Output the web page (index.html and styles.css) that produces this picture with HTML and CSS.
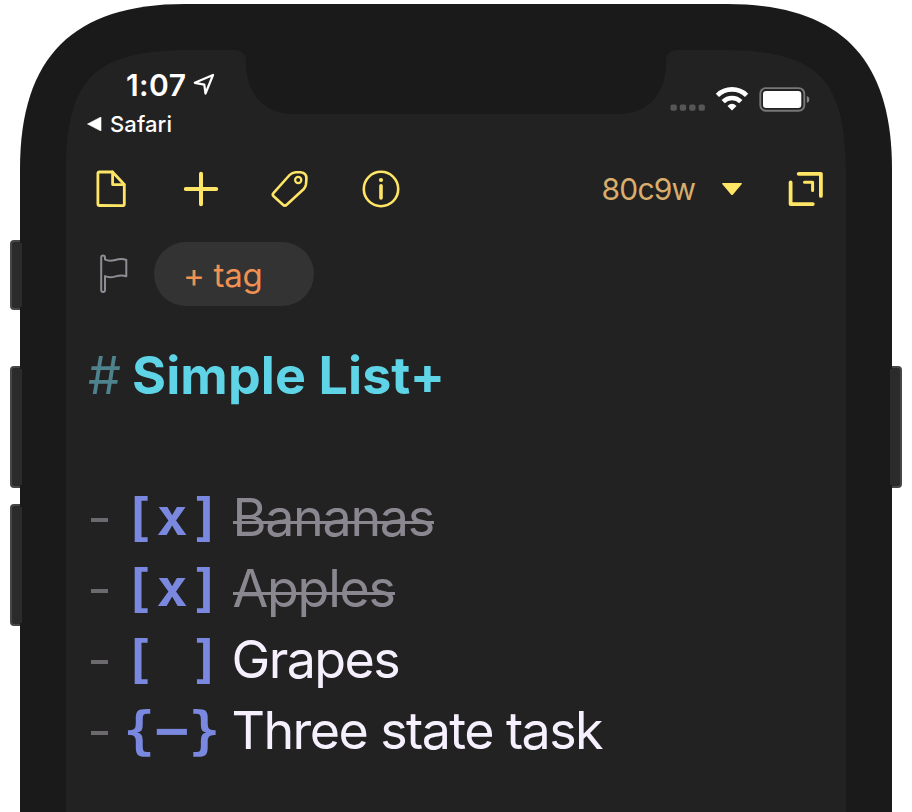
FILE: index.html
```html
<!DOCTYPE html>
<html lang="en">
<head>
<meta charset="utf-8">
<title>Simple List+</title>
<link rel="stylesheet" href="styles.css">
</head>
<body>
<div class="stage">
  <svg class="device" viewBox="0 0 912 812" aria-hidden="true">
    <g fill="#2b2b2b" stroke="#474747" stroke-width="2">
      <rect x="11" y="241" width="20" height="68" rx="3"/>
      <rect x="11" y="367" width="20" height="120" rx="3"/>
      <rect x="11" y="505" width="20" height="120" rx="3"/>
      <rect x="881" y="367" width="20" height="120" rx="3"/>
    </g>
    <path fill="#1a1a1a" d="M20 812V169C20 57 73 4 185 4H727C839 4 892 57 892 169V812Z"/>
    <path fill="#2b2b2b" d="M20 243h2v64h-2zM20 369h2v116h-2zM20 507h2v116h-2zM890 369h2v116h-2z"/>
    <path fill="#222222" d="M66 812V174C66 78 94 50 190 50H234C242 50 246 54 246 62C246 94 264 114 294 114H618C648 114 666 94 666 62C666 54 670 50 678 50H722C818 50 846 78 846 174V812Z"/>
  </svg>
  <main class="screen">
    <header class="status">
      <div class="status-left">
        <div class="clock"><span class="time">1:07</span>
          <svg class="location" width="22" height="23" viewBox="0 0 22 23"><path d="M1.8 9.8L20 2L12.5 20.5L11.3 11.6Z" fill="none" stroke="#fff" stroke-width="2.2" stroke-linejoin="round"/></svg>
        </div>
        <div class="back"><svg width="15" height="14" viewBox="0 0 15 14"><path d="M0.5 7L14 0V14Z" fill="#fff" stroke="#fff" stroke-width=".6" stroke-linejoin="round"/></svg><span class="app">Safari</span></div>
      </div>
      <svg class="signals" width="140" height="28" viewBox="670 85 140 28">
        <g fill="#565657"><rect x="670.5" y="104.5" width="6.3" height="6.3" rx="1.8"/><rect x="679.8" y="104.5" width="6.3" height="6.3" rx="1.8"/><rect x="689.2" y="104.5" width="6.3" height="6.3" rx="1.8"/><rect x="698.6" y="104.5" width="6.3" height="6.3" rx="1.8"/></g>
        <g fill="none" stroke="#fff" stroke-width="4.6"><path d="M717.4 95.3A21 21 0 0 1 746.6 95.3"/><path d="M723.2 101.6A12.6 12.6 0 0 1 740.8 101.6"/></g>
        <path fill="#fff" d="M727.5 105.9Q732 101.5 736.5 105.9L732 110.6Z"/>
        <rect x="760.3" y="88.1" width="44" height="22.6" rx="5.5" fill="none" stroke="#777" stroke-width="1.9"/>
        <rect x="763" y="91" width="38.3" height="17" rx="3.2" fill="#fff"/>
        <path fill="#858585" d="M806.8 96Q809.4 97 809.4 99.4Q809.4 101.8 806.8 102.8Z"/>
      </svg>
    </header>
    <nav class="toolbar">
      <svg class="tools" width="306" height="42" viewBox="94 168 306 42" fill="none" stroke="#fee566" stroke-width="2.8" stroke-linejoin="round" stroke-linecap="round">
        <path d="M99.500 172H112.500L124.300 184.500V204Q124.300 205.700 122.600 205.700L99.500 205.500Q97.900 205.500 97.900 204V173.500Q97.900 172 99.500 172Z"/>
        <path d="M112.600 172V184.600H124"/>
        <path d="M185.800 189H216.200M201 173.800V204.200" stroke-width="4"/>
        <path d="M273.400 193.200L289.600 175Q292 172.400 295.800 172.200L300.500 172.300Q306.600 172.600 306.400 178.800L306 184.200Q305.700 187 303.800 189L286.700 204.700Q284.800 206.400 283 204.700L273.600 196.200Q272 194.700 273.400 193.200Z" stroke-width="2.6"/>
        <circle cx="298.200" cy="180" r="3.1" stroke-width="2.2"/>
        <circle cx="381" cy="189" r="17.2" stroke-width="2.6"/>
        <path d="M381 185.700V198" stroke-width="3.6"/>
        <circle cx="381" cy="180" r="2.1" fill="#fee566" stroke="none"/>
      </svg>
      <div class="doc"><span class="doc-id">80c9w</span>
        <svg class="caret" width="20" height="13" viewBox="0 0 20 13"><path fill="#fee566" d="M0.800 0H19.200Q20.500 .2 19.600 1.200L11 11.400Q10 12.500 9 11.400L.4 1.200Q-.4 .2 .8 0Z"/></svg>
      </div>
      <svg class="expand" width="36" height="36" viewBox="788 171 36 36" fill="none" stroke="#fee566" stroke-width="3.8" stroke-linecap="round" stroke-linejoin="round"><path d="M798.700 173.800H820.900V195.900M790.600 182.300V204.100H812.800"/><path d="M804.500 182.200H812.600V190.400" stroke-width="3"/></svg>
    </nav>
    <div class="tags">
      <svg width="30" height="40" viewBox="99 254 30 40" fill="none" stroke="#8f8c94" stroke-width="2" stroke-linejoin="round"><path d="M105 259.500C113 264 117 256.200 126.300 260V276.300C117.500 272.500 113 280.500 105 276V290Q105 292 103 292Q101.200 292 101.200 290V257.500Q101.200 255.500 103 255.500Q105 255.500 105 257.500Z"/></svg>
      <span class="pill"><span class="tag">+ tag</span></span>
    </div>
    <h1 class="title"><span class="hash">#</span><span class="heading">Simple List+</span></h1>
    <ul class="list">
      <li class="done"><span class="dash"></span><span class="box">[x]</span><span class="item">Bananas</span></li>
      <li class="done"><span class="dash"></span><span class="box">[x]</span><span class="item">Apples</span></li>
      <li><span class="dash"></span><span class="box">[ ]</span><span class="item open">Grapes</span></li>
      <li><span class="dash"></span><span class="box braces">{<span class="bar">−</span>}</span><span class="item open">Three state task</span></li>
    </ul>
  </main>
</div>
</body>
</html>
```
FILE: styles.css
```css
* { box-sizing: border-box; }
body { margin: 0; background: #fff; font-family: Inter, "Liberation Sans", sans-serif; }
svg { display: block; flex: none; }
.stage { position: relative; width: 912px; height: 812px; overflow: hidden; }
.device { position: absolute; inset: 0; width: 912px; height: 812px; }
.screen { position: relative; width: 780px; margin-left: 66px; padding-top: 65px; color: #fff; }
.status { display: flex; justify-content: space-between; height: 100px; padding: 0 36px 0 21px; }
.clock { display: flex; align-items: center; height: 40px; padding-left: 39px; gap: 7px; }
.time { font-size: 30px; font-weight: 600; line-height: 42px; letter-spacing: 0.4px; }
.location { margin-top: -1px; }
.back { display: flex; align-items: center; height: 30px; margin-top: 4px; gap: 8px; }
.app { font-size: 22px; font-weight: 500; line-height: 30px; letter-spacing: 0.1px; }
.signals { margin-top: 20px; }
.toolbar { display: flex; align-items: center; height: 48px; padding: 0 22px 0 28px; }
.doc { display: flex; align-items: center; margin-left: 201.5px; width: 140px; justify-content: space-between; }
.doc-id { color: #d9ae6c; font-size: 30px; line-height: 48px; font-weight: 400; letter-spacing: -0.8px; }
.expand { margin-left: auto; }
.tags { display: flex; align-items: center; height: 64px; margin-top: 29px; padding-left: 33px; gap: 25px; }
.pill { width: 160px; height: 64px; border-radius: 32px; background: #333; padding-left: 29px; }
.tag { color: #f09153; font-size: 33px; line-height: 66px; letter-spacing: -0.3px; }
.title { display: flex; height: 70px; margin: 35px 0 0; padding-left: 22px; font-size: 52px; line-height: 70px; white-space: nowrap; }
.hash { width: 44px; color: #4e828d; font-weight: 400; }
.heading { color: #5fd4e6; font-weight: 700; letter-spacing: 0.1px; }
.list { list-style: none; margin: 71px 0 0; padding: 0 0 0 25px; }
.list li { display: flex; align-items: center; height: 71px; font-size: 52px; line-height: 71px; white-space: pre; }
.dash { width: 17px; height: 4px; margin-top: 4px; background: #6c6a6f; }
.box { width: 124.5px; padding-left: 16px; color: #7a88df; font-family: "DejaVu Sans Mono", monospace; font-weight: 700; letter-spacing: 1.3px; }
.braces { padding-left: 15.5px; }
.bar { display: inline-block; transform: scaleX(1.08); }
.item { position: relative; color: #f6effd; letter-spacing: -1.3px; }
.open { left: -1px; letter-spacing: -1.6px; }
.done .item { color: #8b8790; }
.done .item::after { content: ""; position: absolute; left: 0; right: 0; top: 39px; height: 3px; background: #8b8790; }
```
